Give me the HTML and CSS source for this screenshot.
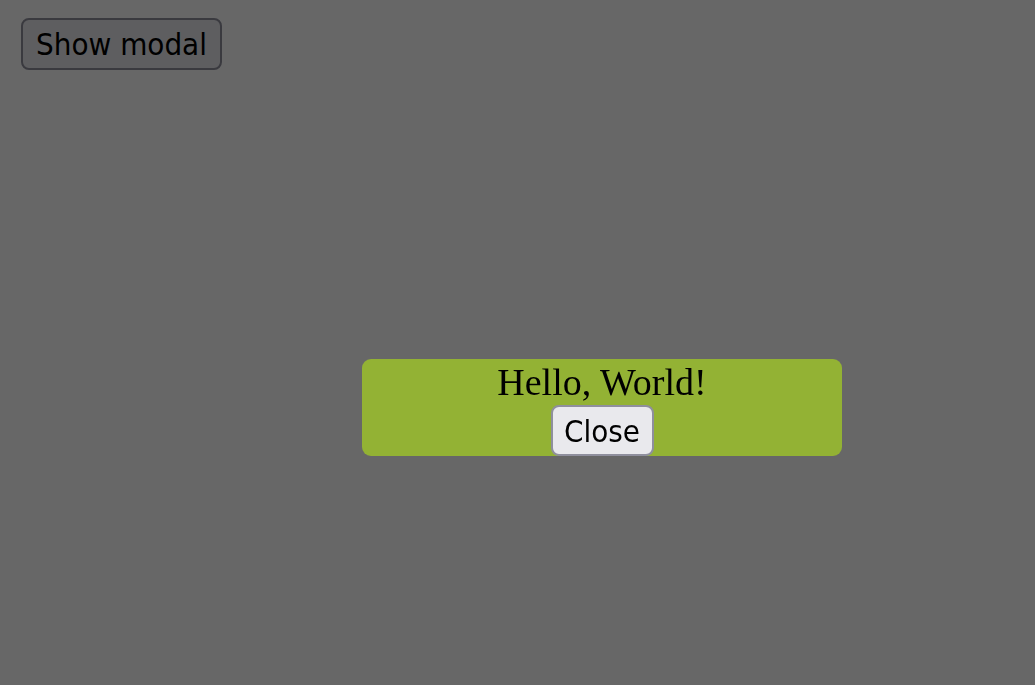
FILE: index.html
```html
<!DOCTYPE html>
<html>
<head>
<meta charset="utf-8">
<link rel="stylesheet" href="styles.css">
</head>
<body>
<div class="page">
  <button class="btn show-btn">Show modal</button>
</div>
<div class="overlay">
  <div class="modal">
    <div class="modal-title">Hello, World!</div>
    <button class="btn close-btn">Close</button>
  </div>
</div>
</body>
</html>
```

FILE: styles.css
```css
html, body {
  margin: 0;
  padding: 0;
  width: 100%;
  height: 100%;
  background: #ffffff;
}
.page {
  padding: 18px 0 0 21px;
}
.btn {
  font-family: "DejaVu Sans Condensed", "DejaVu Sans", sans-serif;
  font-size: 31px;
  color: #000;
  background: #e9e9ed;
  border: 2px solid #8f8f9d;
  border-radius: 8px;
  padding: 0;
  margin: 0;
  display: flex;
  align-items: center;
  justify-content: center;
  box-sizing: border-box;
}
.show-btn {
  width: 201px;
  height: 52px;
}
.overlay {
  position: fixed;
  inset: 0;
  background: rgba(0, 0, 0, 0.597);
}
.modal {
  position: absolute;
  left: 362px;
  top: 359px;
  width: 480px;
  height: 97px;
  background: #93b234;
  border-radius: 9px;
  display: flex;
  flex-direction: column;
  align-items: center;
}
.modal-title {
  font-family: "Liberation Serif", serif;
  font-size: 38px;
  line-height: 46px;
  height: 46px;
  color: #000;
}
.close-btn {
  width: 103px;
  height: 51px;
}
```
